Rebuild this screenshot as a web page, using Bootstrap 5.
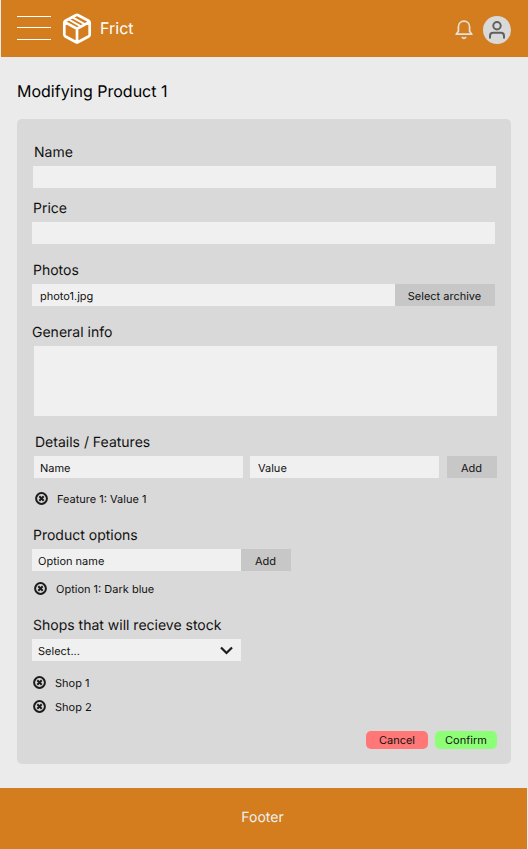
<!DOCTYPE html>
<html lang="en">
<head>
<meta charset="utf-8">
<meta name="viewport" content="width=device-width, initial-scale=1">
<title>Frict - Modifying Product 1</title>
<link href="https://cdn.jsdelivr.net/npm/bootstrap@5.3.0/dist/css/bootstrap.min.css" rel="stylesheet">
<style>
body{background:#ebebeb;font-family:Inter,"Liberation Sans",sans-serif;color:#111;font-size:11px;line-height:20px;text-rendering:geometricPrecision}
input,button,textarea{text-rendering:geometricPrecision}
.topbar{background:#d37d1f;height:57px;margin-left:1px;padding:0 16px}
.brand-name{font-size:16px;color:#fff;margin:-1px 0 0 5px}
.burger{width:34px;height:27px;background:none}
.bell{margin-top:2px}
.avatar{width:28px;height:28px;background:#d9d9d9;margin:2px 1px 0 10px}
.page-title{font-size:16px;line-height:24px;margin:22px 17px 16px;color:#000}
.panel{background:#d9d9d9;border-radius:5px;height:645px;margin:0 17px 24px;width:494px;padding:23px 0 0 15px}
.field{width:463px}
.off1{margin-left:1px}.off2{margin-left:2px}
.gap-s{margin-top:10px}.gap-m{margin-top:16px}
.field-label{display:block;font-size:14px;line-height:20px;height:24px;padding:1px 0 0 1px}
.field .form-control{background-color:#f0f0f0;border:0;border-radius:0;height:22px;min-height:22px;font-size:11px;line-height:20px;padding:2px 6px 0;color:#111}
.field .form-control::placeholder{color:#111;opacity:1}
.field textarea.form-control{height:70px;resize:none}
.field .btn-flat{background:#c7c7c7;border:0;border-radius:0;height:22px;font-size:11px;line-height:20px;padding:2px 1px 0 0;color:#111}
.w-add{width:50px}.w-arch{width:100px}.w-opt{width:209px}.w-val{width:189px;margin-left:7px}
.entry{height:20px;gap:9px}
.entry svg{flex:none;margin-top:-1px}
.first-feature{margin-top:11px}.first-shop{margin-top:12px}
.chevron{margin-top:-1px}
.actions{margin-top:14px;gap:7px}
.btn-act{height:18px;width:62px;border:0;border-radius:5px;font-size:11px;line-height:18px;padding:0;color:#111}
.act-no{background:#ff7777}.act-yes{background:#8cff77}
.foot{background:#d37d1f;height:61px;margin-right:1px;font-size:14px;color:#f0f0f0;padding:0 2px 1px 0}
</style>
<script src="https://cdn.jsdelivr.net/npm/bootstrap@5.3.0/dist/js/bootstrap.bundle.min.js"></script>
</head>
<body>
<svg class="d-none"><symbol id="remove" viewBox="0 0 13 13"><circle cx="6.5" cy="6.5" r="5.4" fill="none" stroke="#1c1c1c" stroke-width="2"/><path d="M4.300 4.300l4.400 4.400M8.700 4.300L4.300 8.700" stroke="#1c1c1c" stroke-width="2"/></symbol></svg>
<header class="topbar d-flex align-items-center">
  <button type="button" class="burger btn p-0 border-0 d-flex" aria-label="Menu"><svg width="34" height="27"><path d="M0 1.500h34M0 12.500h34M0 24.500h34" stroke="#fff"/></svg></button>
  <svg class="ms-2" width="36" height="36" viewBox="59 10.500 36 36" fill="none" stroke="#fff" stroke-width="2.700" stroke-linejoin="round" stroke-linecap="round"><path d="M75.800 14.700Q77 14 78.200 14.700L88.500 20.200Q89.700 21 89.700 22.300V34Q89.700 35.300 88.500 36L78.200 41.500Q77 42.200 75.800 41.500L65.500 36Q64.300 35.300 64.300 34V22.300Q64.300 21 65.500 20.200ZM64.800 21.600L77 28.300L89.200 21.600M77 28.300V41.500"/><path stroke-width="2" d="M72.500 16.800L84.700 23.600M68.700 19L80.900 25.800"/></svg>
  <span class="brand-name">Frict</span>
  <svg class="bell ms-auto" width="18" height="20" viewBox="0 0 18 20" fill="none" stroke="#e6e1da" stroke-width="1.700" stroke-linejoin="round"><path d="M1.200 14.200H16.800L14.600 11.200V7C14.600 3.600 12.200 1.200 9 1.200S3.400 3.600 3.400 7V11.200Z"/><path d="M7 17Q9 19.600 11 17"/></svg>
  <div class="avatar rounded-circle d-flex"><svg width="28" height="28" viewBox="0 0 28 28" fill="none" stroke="#606060" stroke-width="2"><circle cx="14" cy="9.800" r="3.700"/><path d="M7 22.500V20Q7 16.800 10.200 16.800H17.800Q21 16.800 21 20V22.500"/></svg></div>
</header>
<main>
  <h1 class="page-title fw-normal">Modifying Product 1</h1>
  <form class="panel">
    <div class="field off1"><label class="field-label">Name</label><input class="form-control"></div>
    <div class="field gap-s"><label class="field-label">Price</label><input class="form-control"></div>
    <div class="field gap-m"><label class="field-label">Photos</label>
      <div class="d-flex"><input class="form-control flex-fill ps-2" value="photo1.jpg"><button type="button" class="btn btn-flat w-arch flex-shrink-0">Select archive</button></div></div>
    <div class="field gap-m"><label class="field-label ps-0">General info</label><textarea class="form-control off2"></textarea></div>
    <div class="field gap-m off2"><label class="field-label">Details / Features</label>
      <div class="d-flex"><input class="form-control w-opt" placeholder="Name"><input class="form-control w-val ps-2" placeholder="Value"><button type="button" class="btn btn-flat w-add ms-2">Add</button></div>
      <div class="entry first-feature d-flex align-items-center off1"><svg width="13" height="13"><use href="#remove"/></svg><span>Feature 1: Value 1</span></div></div>
    <div class="field gap-m"><label class="field-label">Product options</label>
      <div class="d-flex"><input class="form-control w-opt" placeholder="Option name"><button type="button" class="btn btn-flat w-add">Add</button></div>
      <div class="entry d-flex align-items-center off2 mt-2"><svg width="13" height="13"><use href="#remove"/></svg><span>Option 1: Dark blue</span></div></div>
    <div class="field gap-m"><label class="field-label">Shops that will recieve stock</label>
      <div class="form-control w-opt d-flex align-items-center justify-content-between pe-2"><span>Select...</span><svg class="chevron" width="13" height="9" viewBox="0 0 13 9"><path d="M1 1.500L6.500 7L12 1.500" fill="none" stroke="#1c1c1c" stroke-width="2.200"/></svg></div>
      <div class="entry first-shop d-flex align-items-center off1"><svg width="13" height="13"><use href="#remove"/></svg><span>Shop 1</span></div>
      <div class="entry d-flex align-items-center off1 mt-1"><svg width="13" height="13"><use href="#remove"/></svg><span>Shop 2</span></div></div>
    <div class="field actions off2 d-flex justify-content-end"><button type="button" class="btn btn-act act-no">Cancel</button><button type="button" class="btn btn-act act-yes">Confirm</button></div>
  </form>
</main>
<footer class="foot d-flex align-items-center justify-content-center">Footer</footer>
</body>
</html>
